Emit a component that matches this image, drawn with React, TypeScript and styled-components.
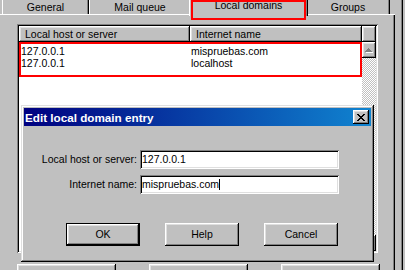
import styled, { createGlobalStyle } from "styled-components";

const GlobalStyle = createGlobalStyle`
  html, body {
    margin: 0;
    padding: 0;
    background: #c0c0c0;
  }
  body {
    font-family: "Liberation Sans", Arial, sans-serif;
    font-size: 10.5px;
    color: #000;
  }
`;

// classic 3D edges
const raisedEdge = `
  box-shadow: inset -1px -1px #000, inset 1px 1px #fff,
    inset -2px -2px #808080, inset 2px 2px #dfdfdf;
`;

const sunkenEdge = `
  box-shadow: inset 1px 1px #808080, inset -1px -1px #fff,
    inset 2px 2px #000, inset -2px -2px #dfdfdf;
`;

const Screen = styled.div`
  position: relative;
  width: 405px;
  height: 270px;
  overflow: hidden;
  display: flex;
  background: #c0c0c0;
`;

const Main = styled.div`
  width: 395px;
  flex-shrink: 0;
  display: flex;
  flex-direction: column;
`;

const WindowEdge = styled.div`
  width: 2px;
  margin-left: 6px;
  flex-shrink: 0;
  background: #000;
  box-shadow: inset 1px 0 #808080;
`;

// tabs row
const TabStrip = styled.div`
  height: 14px;
  display: flex;
  align-items: flex-end;
  padding-left: 2px;
`;

const Tab = styled.div<{ $w: number; $active?: boolean }>`
  position: relative;
  z-index: ${(p) => (p.$active ? 1 : 0)};
  box-sizing: border-box;
  flex-shrink: 0;
  width: ${(p) => p.$w}px;
  height: ${(p) => (p.$active ? 20 : 16)}px;
  margin: ${(p) => (p.$active ? "0 -2px -2px" : "0")};
  padding-top: 3px;
  line-height: 13px;
  text-align: center;
  white-space: nowrap;
  background: #c0c0c0;
  box-shadow: inset 1px 1px #fff, inset -1px 0 #000, inset -2px 0 #808080;

  ${(p) =>
    p.$active &&
    `
    &::after {
      content: "";
      position: absolute;
      top: 4px;
      left: 2px;
      right: 2px;
      bottom: -4px;
      border: 2px solid #f00;
    }
  `}
`;

const TabPage = styled.div`
  flex: 1;
  border-top: 1px solid #fff;
  box-shadow: inset -1px 0 #000, inset -2px 0 #808080;
  padding: 9px 0 0 17px;
`;

// list view
const ListView = styled.div`
  box-sizing: border-box;
  width: 361px;
  height: 229px;
  padding: 2px;
  display: flex;
  background: #fff;
  ${sunkenEdge}
`;

const ListMain = styled.div`
  flex: 1;
  display: flex;
  flex-direction: column;
`;

const Header = styled.div`
  display: grid;
  grid-template-columns: 171px 1fr;
  height: 16px;
`;

const HeaderCell = styled.div`
  padding-left: 6px;
  line-height: 16px;
  background: #c0c0c0;
  white-space: nowrap;
  ${raisedEdge}
`;

const Marked = styled.div`
  box-sizing: border-box;
  height: 35px;
  padding-top: 1px;
  border: 2px solid #f00;
`;

const Row = styled.div`
  display: grid;
  grid-template-columns: 170px 1fr;
  line-height: 12px;
  white-space: nowrap;
`;

const ScrollBar = styled.div`
  width: 14px;
  display: flex;
  flex-direction: column;
`;

const ScrollCorner = styled.div`
  height: 16px;
  background: #c0c0c0;
  ${raisedEdge}
`;

const ScrollButton = styled.div`
  height: 16px;
  display: flex;
  align-items: center;
  justify-content: center;
  background: #c0c0c0;
  ${raisedEdge}
`;

const ScrollTrack = styled.div`
  flex: 1;
  background-color: #fff;
  background-image: conic-gradient(#c0c0c0 25%, #fff 0 50%, #c0c0c0 0 75%, #fff 0);
  background-size: 2px 2px;
`;

const BottomBar = styled.div`
  display: flex;
  gap: 33px;
  margin-top: 11px;
`;

const PageButton = styled.div`
  width: 99px;
  height: 23px;
  background: #c0c0c0;
  ${raisedEdge}
`;

// dialog window
const Dialog = styled.div`
  position: absolute;
  left: 21px;
  top: 105px;
  z-index: 2;
  box-sizing: border-box;
  width: 353px;
  height: 157px;
  padding: 3px;
  display: flex;
  flex-direction: column;
  background: #c0c0c0;
  box-shadow: inset -1px -1px #000, inset 1px 1px #dfdfdf,
    inset -2px -2px #808080, inset 2px 2px #fff;
`;

const TitleBar = styled.div`
  height: 18px;
  display: flex;
  align-items: center;
  justify-content: space-between;
  padding: 0 2px 0 1px;
  background: linear-gradient(to right, #000080, #1084d0);
`;

const TitleText = styled.span`
  color: #fff;
  font-weight: bold;
  font-size: 11.7px;
  white-space: nowrap;
`;

const CloseButton = styled.div`
  width: 16px;
  height: 14px;
  display: flex;
  align-items: center;
  justify-content: center;
  background: #c0c0c0;
  ${raisedEdge}
`;

const DialogBody = styled.div`
  flex: 1;
  padding-top: 24px;
  display: flex;
  flex-direction: column;
`;

const Form = styled.div`
  display: grid;
  grid-template-columns: 113px 199px;
  column-gap: 3px;
  row-gap: 6px;
`;

const Label = styled.div`
  text-align: right;
  line-height: 19px;
  white-space: nowrap;
`;

const Field = styled.div`
  box-sizing: border-box;
  height: 19px;
  padding-left: 2px;
  line-height: 19px;
  background: #fff;
  white-space: nowrap;
  ${sunkenEdge}
`;

const Caret = styled.span`
  display: inline-block;
  width: 1px;
  height: 11px;
  background: #000;
  vertical-align: -2px;
`;

const ButtonRow = styled.div`
  display: flex;
  gap: 25px;
  margin-top: 29px;
  padding-left: 42px;
`;

const Button = styled.div<{ $default?: boolean }>`
  box-sizing: border-box;
  width: 74px;
  height: 23px;
  padding-bottom: 1px;
  display: flex;
  align-items: center;
  justify-content: center;
  background: #c0c0c0;
  border: ${(p) => (p.$default ? "1px solid #000" : "none")};
  ${raisedEdge}
`;

function CloseGlyph() {
  return (
    <svg width="8" height="7" viewBox="0 0 8 7" shapeRendering="crispEdges">
      <path
        fill="#000"
        d="M0 0h2v1H0z M6 0h2v1H6z M1 1h2v1H1z M5 1h2v1H5z M2 2h4v1H2z M3 3h2v1H3z M2 4h4v1H2z M1 5h2v1H1z M5 5h2v1H5z M0 6h2v1H0z M6 6h2v1H6z"
      />
    </svg>
  );
}

function Arrow({ down }: { down?: boolean }) {
  const d = down
    ? "M0 0h7v1H6v1H5v1H4v1H3V3H2V2H1V1H0z"
    : "M3 0h1v1h1v1h1v1h1v1H0V3h1V2h1V1h1z";
  return (
    <svg width="8" height="5" viewBox="0 0 8 5" shapeRendering="crispEdges">
      <path d={d} fill="#fff" transform="translate(1 1)" />
      <path d={d} fill="#808080" />
    </svg>
  );
}

const entries = [
  { host: "127.0.0.1", name: "mispruebas.com" },
  { host: "127.0.0.1", name: "localhost" },
];

export default function App() {
  return (
    <>
      <GlobalStyle />
      <Screen>
        <Main>
          <TabStrip>
            <Tab $w={87}>General</Tab>
            <Tab $w={102}>Mail queue</Tab>
            <Tab $w={119} $active>
              Local domains
            </Tab>
            <Tab $w={84}>Groups</Tab>
          </TabStrip>
          <TabPage>
            <ListView>
              <ListMain>
                <Header>
                  <HeaderCell>Local host or server</HeaderCell>
                  <HeaderCell>Internet name</HeaderCell>
                </Header>
                <Marked>
                  {entries.map((e, i) => (
                    <Row key={i}>
                      <span>{e.host}</span>
                      <span>{e.name}</span>
                    </Row>
                  ))}
                </Marked>
              </ListMain>
              <ScrollBar>
                <ScrollCorner />
                <ScrollButton>
                  <Arrow />
                </ScrollButton>
                <ScrollTrack />
                <ScrollButton>
                  <Arrow down />
                </ScrollButton>
              </ScrollBar>
            </ListView>
            <BottomBar>
              <PageButton />
              <PageButton />
              <PageButton />
            </BottomBar>
          </TabPage>
        </Main>
        <WindowEdge />

        <Dialog>
          <TitleBar>
            <TitleText>Edit local domain entry</TitleText>
            <CloseButton>
              <CloseGlyph />
            </CloseButton>
          </TitleBar>
          <DialogBody>
            <Form>
              <Label>Local host or server:</Label>
              <Field>127.0.0.1</Field>
              <Label>Internet name:</Label>
              <Field>
                mispruebas.com
                <Caret />
              </Field>
            </Form>
            <ButtonRow>
              <Button $default>OK</Button>
              <Button>Help</Button>
              <Button>Cancel</Button>
            </ButtonRow>
          </DialogBody>
        </Dialog>
      </Screen>
    </>
  );
}
